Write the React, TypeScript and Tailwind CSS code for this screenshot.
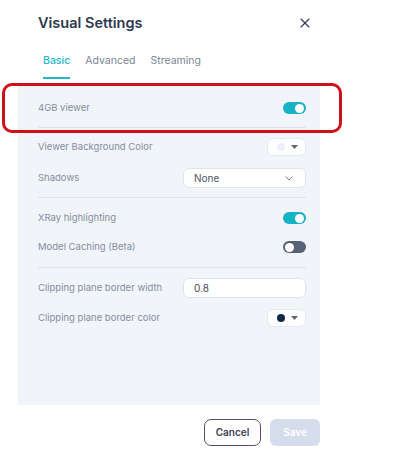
import { X } from "lucide-react";

function Toggle({ on }: { on: boolean }) {
  return (
    <div
      className={`w-[23px] h-[12px] rounded-full flex items-center px-[2px] ${on ? "bg-[#17b3c4] justify-end" : "bg-[#586276] justify-start"}`}
    >
      <div className="w-[9px] h-[9px] rounded-full bg-white" />
    </div>
  );
}

function ColorButton({ color, ring }: { color: string; ring?: boolean }) {
  return (
    <div className="w-[39px] h-[18px] bg-white rounded-[6px] border border-[#e4e9f0] flex items-center justify-end gap-[6px] pr-[7px]">
      <div
        className={`w-[8px] h-[8px] rounded-full ${ring ? "border border-[#eceef6]" : ""}`}
        style={{ backgroundColor: color }}
      />
      <svg width="7" height="4" viewBox="0 0 7 4">
        <path d="M0 0 L7 0 L3.5 4 Z" fill="#5d6676" />
      </svg>
    </div>
  );
}

function Row({ label, children }: { label: string; children: React.ReactNode }) {
  return (
    <div className="h-[20px] flex items-center justify-between">
      <span className="text-[9.5px] text-[#858e9e]">{label}</span>
      {children}
    </div>
  );
}

function Divider() {
  return <div className="h-px bg-[#dde3ea]" />;
}

export default function App() {
  return (
    <div
      className="relative w-[400px] h-[456px] bg-white overflow-hidden"
      style={{ fontFamily: "Inter, 'Noto Sans', sans-serif" }}
    >
      <div className="ml-[18px] w-[302px] h-full flex flex-col">
        <div className="h-[84px] flex flex-col">
          <div className="flex items-center justify-between pl-[20px] pr-[7px] pt-[13px]">
            <h1 className="text-[14.5px] font-semibold text-[#2e3a4d] leading-[20px]">Visual Settings</h1>
            <X className="w-[16px] h-[16px] text-[#2e3a4d]" strokeWidth={1.7} />
          </div>
          <div className="flex gap-[15px] pl-[25px] mt-[20px]">
            <div className="flex flex-col">
              <span className="text-[10.5px] font-medium text-[#22b6c8] leading-[16px]">Basic</span>
              <div className="h-[2px] bg-[#22b6c8] mt-[8px]" />
            </div>
            <span className="text-[10.5px] text-[#7c8493] leading-[16px]">Advanced</span>
            <span className="text-[10.5px] text-[#7c8493] leading-[16px]">Streaming</span>
          </div>
        </div>

        <div className="h-[321px] bg-[#f1f4f9] px-[14px] pt-[14px] flex flex-col">
          <div className="pl-[6px] flex flex-col">
            <Row label="4GB viewer">
              <Toggle on />
            </Row>
            <div className="mt-[9px]"><Divider /></div>
            <div className="mt-[9px]">
              <Row label="Viewer Background Color">
                <ColorButton color="#eef0f8" ring />
              </Row>
            </div>
            <div className="mt-[11px]">
              <Row label="Shadows">
                <div className="w-[123px] h-[20px] bg-white rounded-[6px] border border-[#dfe4eb] flex items-center justify-between pl-[10px] pr-[12px]">
                  <span className="text-[10px] text-[#4a5464]">None</span>
                  <svg width="8" height="5" viewBox="0 0 8 5" fill="none">
                    <path d="M0.5 0.5 L4 4 L7.5 0.5" stroke="#7b8494" strokeWidth="1" />
                  </svg>
                </div>
              </Row>
            </div>
            <div className="mt-[9px]"><Divider /></div>
            <div className="mt-[10px]">
              <Row label="XRay highlighting">
                <Toggle on />
              </Row>
            </div>
            <div className="mt-[9px]">
              <Row label="Model Caching (Beta)">
                <Toggle on={false} />
              </Row>
            </div>
            <div className="mt-[10px]"><Divider /></div>
            <div className="mt-[10px]">
              <Row label="Clipping plane border width">
                <div className="w-[123px] h-[20px] bg-white rounded-[6px] border border-[#dfe4eb] flex items-center pl-[10px]">
                  <span className="text-[10px] text-[#3f4858]">0.8</span>
                </div>
              </Row>
            </div>
            <div className="mt-[10px]">
              <Row label="Clipping plane border color">
                <ColorButton color="#10264b" />
              </Row>
            </div>
          </div>
        </div>

        <div className="flex-1 flex items-start justify-end gap-[9px] pt-[14px]">
          <button className="w-[57px] h-[27px] rounded-[7px] border border-[#4b5463] text-[10px] font-semibold text-[#374151]">
            Cancel
          </button>
          <button className="w-[50px] h-[27px] rounded-[6px] bg-[#d5ddec] text-[10px] font-semibold text-white">
            Save
          </button>
        </div>
      </div>

      <div className="absolute left-[2px] top-[83px] w-[340px] h-[50px] rounded-[10px] border-[3px] border-[#cf0f19]" />
    </div>
  );
}
